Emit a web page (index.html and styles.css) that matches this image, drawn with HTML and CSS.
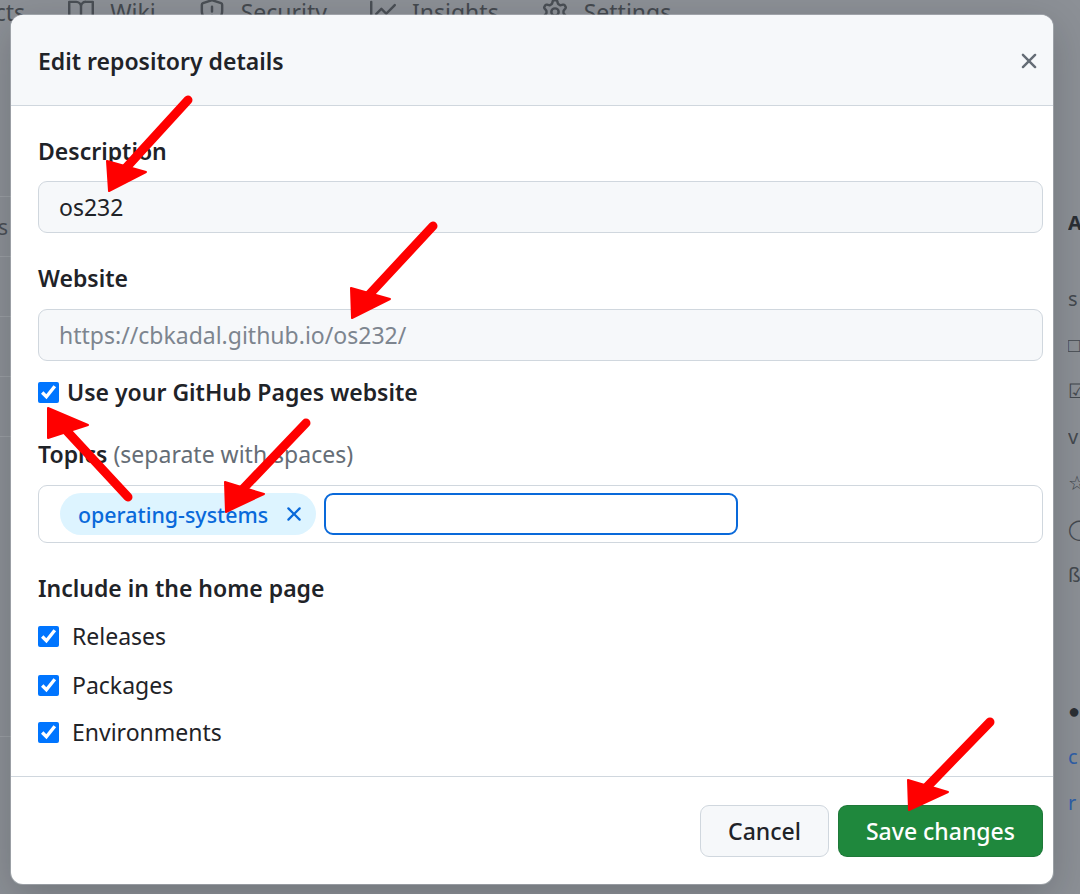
FILE: index.html
```html
<!DOCTYPE html>
<html lang="en">
<head>
<meta charset="utf-8">
<title>Edit repository details</title>
<link rel="stylesheet" href="styles.css">
</head>
<body>
<div class="page">
  <nav class="tabs">
    <span class="tab tab-first">Projects</span>
    <span class="tab">
      <svg viewBox="0 0 16 16"><path d="M0 1.75A.75.75 0 0 1 .75 1h4.253c1.227 0 2.317.59 3 1.501A3.743 3.743 0 0 1 11.006 1h4.245a.75.75 0 0 1 .75.75v10.5a.75.75 0 0 1-.75.75h-4.507a2.25 2.25 0 0 0-1.591.659l-.622.621a.75.75 0 0 1-1.06 0l-.622-.621A2.25 2.25 0 0 0 5.258 13H.75a.75.75 0 0 1-.75-.75Zm7.251 10.324.004-5.073-.002-2.253A2.25 2.25 0 0 0 5.003 2.5H1.5v9h3.757a3.75 3.75 0 0 1 1.994.574ZM8.755 4.75l-.004 7.322a3.752 3.752 0 0 1 1.992-.572H14.5v-9h-3.495a2.25 2.25 0 0 0-2.250 2.25Z"/></svg>
      Wiki
    </span>
    <span class="tab">
      <svg viewBox="0 0 16 16"><path d="M7.467.133a1.748 1.748 0 0 1 1.066 0l5.25 1.68A1.75 1.75 0 0 1 15 3.48V7c0 1.566-.32 3.182-1.303 4.682-.983 1.498-2.585 2.813-5.032 3.855a1.697 1.697 0 0 1-1.33 0c-2.447-1.042-4.049-2.357-5.032-3.855C1.32 10.182 1 8.566 1 7V3.48a1.755 1.755 0 0 1 1.217-1.667Zm.61 1.429a.25.25 0 0 0-.153 0l-5.25 1.68a.25.25 0 0 0-.174.238V7c0 1.358.275 2.666 1.057 3.86.784 1.194 2.121 2.34 4.366 3.297a.196.196 0 0 0 .154 0c2.245-.956 3.582-2.104 4.366-3.298C13.225 9.666 13.5 8.36 13.5 7V3.48a.251.251 0 0 0-.174-.237l-5.25-1.68ZM8.750 4.75v3a.75.75 0 0 1-1.5 0v-3a.75.75 0 0 1 1.5 0ZM9 10.5a1 1 0 1 1-2 0 1 1 0 0 1 2 0Z"/></svg>
      Security
    </span>
    <span class="tab">
      <svg viewBox="0 0 16 16"><path d="M1.5 1.75V13.5h13.75a.75.75 0 0 1 0 1.5H.75a.75.75 0 0 1-.75-.75V1.75a.75.75 0 0 1 1.5 0Zm14.28 2.53-5.25 5.25a.75.75 0 0 1-1.060 0L7 7.06 4.28 9.78a.751.751 0 0 1-1.042-.018.751.751 0 0 1-.018-1.042l3.25-3.25a.75.75 0 0 1 1.06 0L10 7.94l4.72-4.72a.751.751 0 0 1 1.042.018.751.751 0 0 1 .018 1.042Z"/></svg>
      Insights
    </span>
    <span class="tab">
      <svg viewBox="0 0 16 16"><path d="M8 0a8.2 8.2 0 0 1 .701.031C9.444.095 9.99.645 10.16 1.29l.288 1.107c.018.066.079.158.212.224.231.114.454.243.668.386.123.082.233.09.299.071l1.103-.303c.644-.176 1.392.021 1.82.63.27.385.506.792.704 1.218.315.675.111 1.422-.364 1.891l-.814.806c-.049.048-.098.147-.088.294.016.257.016.515 0 .772-.01.147.038.246.088.294l.814.806c.475.469.679 1.216.364 1.891a7.977 7.977 0 0 1-.704 1.217c-.428.61-1.176.807-1.82.63l-1.102-.302c-.067-.019-.177-.011-.3.071a5.909 5.909 0 0 1-.668.386c-.133.066-.194.158-.211.224l-.29 1.106c-.168.646-.715 1.196-1.458 1.26a8.006 8.006 0 0 1-1.402 0c-.743-.064-1.289-.614-1.458-1.26l-.289-1.106c-.018-.066-.079-.158-.212-.224a5.738 5.738 0 0 1-.668-.386c-.123-.082-.233-.09-.299-.071l-1.103.303c-.644.176-1.392-.021-1.82-.63a8.12 8.12 0 0 1-.704-1.218c-.315-.675-.111-1.422.363-1.891l.815-.806c.05-.048.098-.147.088-.294a6.214 6.214 0 0 1 0-.772c.01-.147-.038-.246-.088-.294l-.815-.806C.635 6.045.431 5.298.746 4.623a7.92 7.920 0 0 1 .704-1.217c.428-.61 1.176-.807 1.820-.63l1.102.302c.067.019.177.011.3-.071.214-.143.437-.272.668-.386.133-.066.194-.158.211-.224l.29-1.106C6.009.645 6.556.095 7.299.03 7.53.01 7.764 0 8 0Zm-.571 1.525c-.036.003-.108.036-.137.146l-.289 1.105c-.147.561-.549.967-.998 1.189-.173.086-.34.183-.5.29-.417.278-.97.423-1.529.27l-1.103-.303c-.109-.03-.175.016-.195.045-.22.312-.412.644-.573.99-.014.031-.021.11.059.19l.815.806c.411.406.562.957.53 1.456a4.709 4.709 0 0 0 0 .582c.032.499-.119 1.05-.53 1.456l-.815.806c-.081.08-.073.159-.059.19.162.346.353.677.573.989.02.03.085.076.195.046l1.102-.303c.56-.153 1.113-.008 1.53.27.161.107.328.204.501.29.447.222.85.629.997 1.189l.289 1.105c.029.109.101.143.137.146a6.6 6.6 0 0 0 1.142 0c.036-.003.108-.036.137-.146l.289-1.105c.147-.561.549-.967.998-1.189.173-.086.34-.183.5-.29.417-.278.97-.423 1.529-.27l1.103.303c.109.029.175-.016.195-.045.22-.313.411-.644.573-.99.014-.031.021-.11-.059-.19l-.815-.806c-.411-.406-.562-.957-.53-1.456a4.709 4.709 0 0 0 0-.582c-.032-.499.119-1.05.53-1.456l.815-.806c.081-.08.073-.159.059-.19a6.464 6.464 0 0 0-.573-.989c-.02-.03-.085-.076-.195-.046l-1.102.303c-.56.153-1.113.008-1.53-.27a4.44 4.44 0 0 0-.501-.29c-.447-.222-.85-.629-.997-1.189l-.289-1.105c-.029-.11-.101-.143-.137-.146a6.6 6.6 0 0 0-1.142 0ZM11 8a3 3 0 1 1-6 0 3 3 0 0 1 6 0ZM9.5 8a1.5 1.5 0 1 0-3.001.001A1.5 1.5 0 0 0 9.5 8Z"/></svg>
      Settings
    </span>
  </nav>
  <div class="page-body">
    <div class="left-col">
      <div class="lrow"></div>
      <div class="lrow lrow-s">s</div>
      <div class="lrow"></div>
      <div class="lrow"></div>
      <div class="lrow"></div>
      <div class="lrow lrow-tall"></div>
    </div>
    <div class="right-col">
      <span class="rg rg-bold">A</span>
      <span class="rg rg-s">s</span>
      <span class="rg">&#9633;</span>
      <span class="rg">&#9745;</span>
      <span class="rg">v</span>
      <span class="rg">&#9734;</span>
      <span class="rg">&#9711;</span>
      <span class="rg">&#223;</span>
      <span class="rg rg-gap rg-bold">&#9679;</span>
      <span class="rg rg-link">c</span>
      <span class="rg rg-link">r</span>
    </div>
  </div>
</div>

<div class="dialog" role="dialog" aria-labelledby="dlg-title">
  <header class="dlg-head">
    <h1 class="dlg-title" id="dlg-title">Edit repository details</h1>
    <button class="close" aria-label="Close">
      <svg viewBox="0 0 16 16"><path d="M3.72 3.72a.75.75 0 0 1 1.06 0L8 6.94l3.22-3.22a.749.749 0 0 1 1.275.326.749.749 0 0 1-.215.734L9.06 8l3.22 3.22a.749.749 0 0 1-.326 1.275.749.749 0 0 1-.734-.215L8 9.06l-3.220 3.22a.751.751 0 0 1-1.042-.018.751.751 0 0 1-.018-1.042L6.94 8 3.72 4.78a.75.75 0 0 1 0-1.06Z"/></svg>
    </button>
  </header>

  <div class="dlg-body">
    <label class="label" for="desc">Description</label>
    <input class="input" id="desc" type="text" value="os232">

    <label class="label label-gap" for="web">Website</label>
    <input class="input input-disabled" id="web" type="text" value="https://cbkadal.github.io/os232/" disabled>

    <label class="check-row check-strong">
      <input type="checkbox" class="cb" checked>
      <span>Use your GitHub Pages website</span>
    </label>

    <div class="label label-topics">Topics <span class="muted">(separate with spaces)</span></div>
    <div class="topics">
      <span class="chip">
        <span>operating-systems</span>
        <svg class="chip-x" viewBox="0 0 16 16"><path d="M3.72 3.72a.75.75 0 0 1 1.06 0L8 6.94l3.22-3.22a.749.749 0 0 1 1.275.326.749.749 0 0 1-.215.734L9.06 8l3.22 3.22a.749.749 0 0 1-.326 1.275.749.749 0 0 1-.734-.215L8 9.06l-3.220 3.22a.751.751 0 0 1-1.042-.018.751.751 0 0 1-.018-1.042L6.94 8 3.72 4.78a.75.75 0 0 1 0-1.06Z"/></svg>
      </span>
      <input class="topic-input" type="text" aria-label="Add topic">
    </div>

    <div class="label label-gap label-home">Include in the home page</div>
    <label class="check-row home-row first">
      <input type="checkbox" class="cb" checked>
      <span>Releases</span>
    </label>
    <label class="check-row home-row second">
      <input type="checkbox" class="cb" checked>
      <span>Packages</span>
    </label>
    <label class="check-row home-row third">
      <input type="checkbox" class="cb" checked>
      <span>Environments</span>
    </label>
  </div>

  <footer class="dlg-foot">
    <button class="btn btn-default">Cancel</button>
    <button class="btn btn-primary">Save changes</button>
  </footer>
</div>

<svg class="marks" viewBox="0 0 1080 894" aria-hidden="true">
  <g class="shaft">
    <line x1="188" y1="100" x2="124" y2="170"/>
    <line x1="433" y1="226" x2="367" y2="297"/>
    <line x1="128" y1="497" x2="64" y2="428"/>
    <line x1="306" y1="423" x2="241" y2="491"/>
    <line x1="990" y1="722" x2="925" y2="789"/>
  </g>
  <g class="head">
    <polygon points="109,191 107,161 146,172"/>
    <polygon points="352,318 351,288 390,299"/>
    <polygon points="48,408 48,438 88,425"/>
    <polygon points="226,512 225,482 264,494"/>
    <polygon points="909,810 908,780 948,792"/>
  </g>
</svg>
</body>
</html>
```

FILE: styles.css
```css
* { box-sizing: border-box; }

html, body {
  margin: 0;
  padding: 0;
}

body {
  width: 1080px;
  height: 894px;
  overflow: hidden;
  position: relative;
  background: #8c9096;
  font-family: "Noto Sans", "Liberation Sans", sans-serif;
  color: #1f2328;
}

/* ---------- dimmed page behind the dialog ---------- */
.page {
  display: flex;
  flex-direction: column;
  height: 100%;
}

.tabs {
  display: flex;
  align-items: center;
  gap: 43px;
  height: 30px;
  margin-top: -3px;
  font-size: 23px;
  color: #44494f;
  white-space: nowrap;
}

.tab {
  display: flex;
  align-items: center;
  gap: 16px;
}

.tab-first {
  margin-left: -61px;
}

.tab svg {
  width: 26px;
  height: 26px;
  fill: #4a4f55;
}

.page-body {
  flex: 1;
  display: flex;
  justify-content: space-between;
}

.left-col {
  width: 11px;
  overflow: hidden;
  padding-top: 110px;
}

.lrow {
  height: 60px;
  border-bottom: 1px solid #9a9ea3;
  font-size: 21px;
  color: #4a4f55;
  line-height: 60px;
}

.lrow-s {
  text-indent: -2px;
}

.lrow-tall {
  height: 300px;
}

.right-col {
  width: 12px;
  overflow: hidden;
  display: flex;
  flex-direction: column;
  padding-top: 185px;
  gap: 24px;
  font-size: 20px;
  line-height: 22px;
  color: #44494f;
}

.rg-bold { font-weight: 700; color: #2b2f34; }
.rg-s { margin-top: 30px; }
.rg-gap { margin-top: 90px; }
.rg-link { color: #2f5fa8; }

/* ---------- dialog ---------- */
.dialog {
  position: absolute;
  left: 11px;
  top: 15px;
  width: 1042px;
  background: #ffffff;
  border-radius: 12px;
  overflow: hidden;
  box-shadow: 0 0 0 1px rgba(208, 215, 222, 0.35), 0 12px 40px rgba(20, 24, 28, 0.22);
  display: flex;
  flex-direction: column;
}

.dlg-head {
  height: 91px;
  background: #f6f8fa;
  border-bottom: 1px solid #d0d7de;
  display: flex;
  align-items: center;
  justify-content: space-between;
  padding: 2px 11px 0 27px;
}

.dlg-title {
  margin: 0;
  font-size: 23px;
  font-weight: 600;
  line-height: 30px;
  color: #1f2328;
}

.close {
  width: 26px;
  height: 26px;
  padding: 0;
  border: 0;
  background: transparent;
  display: flex;
}

.close svg {
  width: 26px;
  height: 26px;
  fill: #656d76;
}

.dlg-body {
  display: flex;
  flex-direction: column;
  align-items: stretch;
  padding: 30px 10px 29px 27px;
}

.label {
  display: block;
  font-size: 23px;
  font-weight: 600;
  line-height: 30px;
  margin-bottom: 15px;
  color: #1f2328;
}

.label-gap {
  margin-top: 30px;
}

.label-topics {
  margin-top: 32px;
  margin-bottom: 16px;
}

.label-home {
  margin-bottom: 0;
}

.muted {
  font-weight: 400;
  color: #656d76;
}

.input {
  height: 52px;
  width: 100%;
  margin: 0;
  padding: 0 20px;
  border: 1.5px solid #d0d7de;
  border-radius: 9px;
  background: #f6f8fa;
  font-family: "Noto Sans", "Liberation Sans", sans-serif;
  font-size: 23px;
  color: #1f2328;
  outline: none;
}

.input-disabled {
  color: #7d858f;
  -webkit-text-fill-color: #7d858f;
  margin-top: 1px;
}

.check-row {
  display: flex;
  align-items: center;
  gap: 8px;
  font-size: 23px;
  line-height: 30px;
  margin-top: 16px;
}

.check-strong {
  font-weight: 600;
}

.cb {
  width: 21px;
  height: 21px;
  margin: 0;
  flex: none;
  accent-color: #0075ff;
}

.topics {
  height: 58px;
  display: flex;
  align-items: center;
  gap: 8px;
  padding-left: 21px;
  border: 1.5px solid #d0d7de;
  border-radius: 9px;
  background: #ffffff;
}

.chip {
  height: 42px;
  display: flex;
  align-items: center;
  gap: 14px;
  padding: 0 10px 0 18px;
  border-radius: 21px;
  background: #ddf4ff;
  color: #0969da;
  font-size: 21.4px;
  font-weight: 500;
}

.chip-x {
  width: 24px;
  height: 24px;
  fill: #0969da;
}

.topic-input {
  width: 414px;
  height: 42px;
  margin: 0;
  border: 2px solid #0969da;
  border-radius: 9px;
  background: #ffffff;
  outline: none;
  font-family: "Noto Sans", "Liberation Sans", sans-serif;
  font-size: 23px;
}

.home-row {
  gap: 13px;
  font-weight: 400;
}

.home-row.first { margin-top: 18px; }
.home-row.second { margin-top: 19px; }
.home-row.third { margin-top: 17px; }

.dlg-foot {
  border-top: 1px solid #d0d7de;
  display: flex;
  justify-content: flex-end;
  gap: 9px;
  padding: 28px 10px 27px 27px;
}

.btn {
  height: 52px;
  padding: 0 27px;
  border-radius: 9px;
  font-family: "Noto Sans", "Liberation Sans", sans-serif;
  font-size: 23px;
  font-weight: 500;
  cursor: pointer;
}

.btn-default {
  background: #f6f8fa;
  border: 1.5px solid #d0d7de;
  color: #1f2328;
}

.btn-primary {
  background: #1f883d;
  border: 1.5px solid rgba(31, 35, 40, 0.15);
  color: #ffffff;
}

/* ---------- red annotation arrows ---------- */
.marks {
  position: absolute;
  left: 0;
  top: 0;
  width: 1080px;
  height: 894px;
  pointer-events: none;
}

.shaft line {
  stroke: #ff0000;
  stroke-width: 9;
  stroke-linecap: round;
}

.head polygon {
  fill: #ff0000;
  stroke: #ff0000;
  stroke-width: 2;
  stroke-linejoin: round;
}
```
